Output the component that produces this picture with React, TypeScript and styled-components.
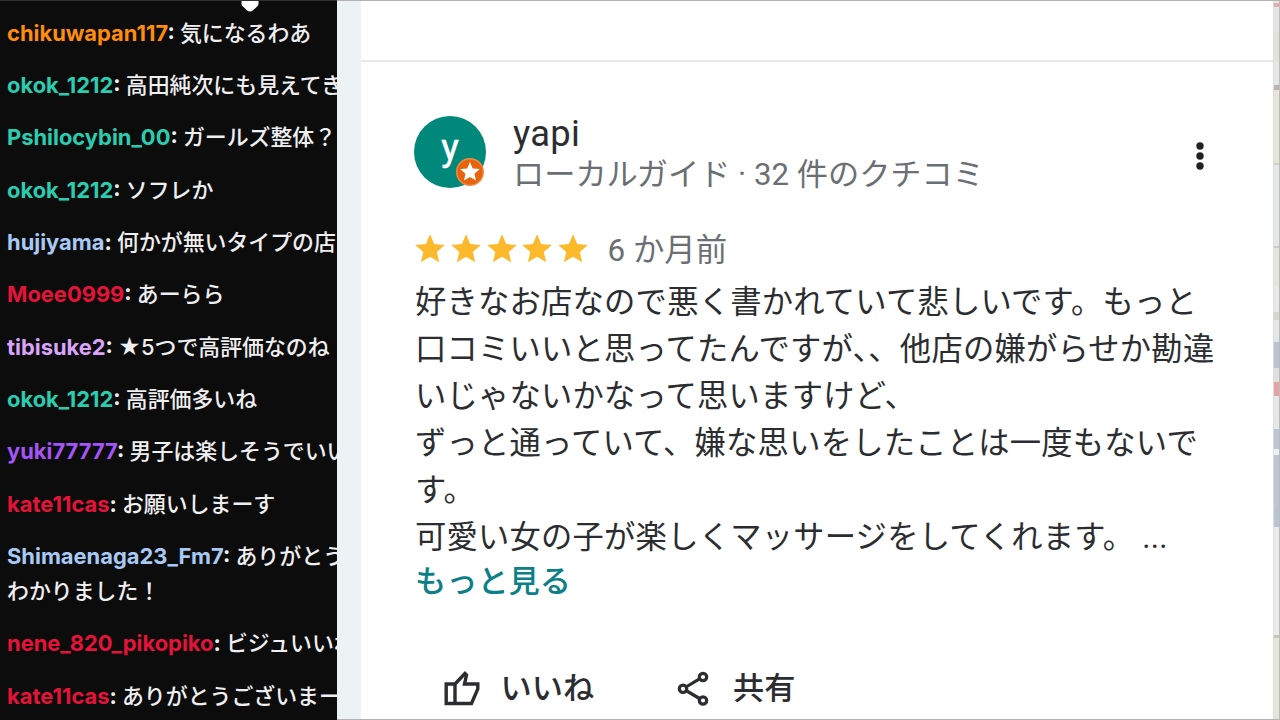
import styled, { createGlobalStyle } from "styled-components";

const colors = {
  chatBg: "#0c0c0c",
  chatText: "#efeff1",
  gutter: "#edf3f4",
  text: "#2c2d30",
  muted: "#6b6f74",
  teal: "#00897b",
  link: "#0b8088",
  star: "#fdb92c",
  badge: "#e8640c",
  line: "#e6e8ea",
};

const GlobalStyle = createGlobalStyle`
  body {
    margin: 0;
    overflow: hidden;
    background: #fff;
  }
`;

const Page = styled.div`
  position: relative;
  display: flex;
  width: 1280px;
  height: 720px;
  overflow: hidden;
`;

const EdgeLine = styled.div<{ $side: "top" | "bottom" }>`
  position: absolute;
  ${(props) => props.$side}: 0;
  left: 337px;
  right: 0;
  height: 1px;
  background: #b2b2b2;
`;

const Chat = styled.aside`
  position: relative;
  flex: none;
  width: 337px;
  height: 720px;
  box-sizing: border-box;
  padding-top: 6px;
  overflow: hidden;
  color: ${colors.chatText};
  background: ${colors.chatBg};
  border-top: 1px solid #303030;
  font-family: Inter, "Noto Sans CJK JP", sans-serif;
`;

const Pointer = styled.svg`
  position: absolute;
  top: -1px;
  left: 222px;
`;

const Message = styled.div`
  padding: 8.77px 0 8.77px 7px;
  font-size: 21.9px;
  font-weight: 500;
  line-height: 34.8px;
  white-space: pre;
`;

const User = styled.span<{ $color: string }>`
  color: ${(props) => props.$color};
  font-weight: 700;
`;

const Colon = styled.span`
  font-weight: 700;
`;

const Gutter = styled.div`
  flex: none;
  width: 24px;
  background: ${colors.gutter};
`;

const Panel = styled.main`
  flex: none;
  width: 912px;
  background: #fff;
  color: ${colors.text};
  font-family: Roboto, "Noto Sans CJK JP", sans-serif;
`;

const PreviousEnd = styled.div`
  height: 60px;
  border-bottom: 2px solid ${colors.line};
`;

const Review = styled.article`
  padding: 54px 50px 0 53px;
`;

const Author = styled.header`
  display: flex;
  height: 72px;
`;

const Avatar = styled.svg`
  flex: none;
  margin-right: 27px;
`;

const AuthorText = styled.div`
  flex: 1;
`;

const Name = styled.div`
  height: 39px;
  font-size: 36.4px;
  letter-spacing: 0.25px;
  line-height: 35px;
`;

const Guide = styled.div`
  color: ${colors.muted};
  font-size: 31.2px;
  line-height: 40px;
  white-space: pre;
`;

const MoreButton = styled.svg`
  margin: 25px 17.5px 0 0;
`;

const Rating = styled.div`
  display: flex;
  align-items: center;
  height: 44px;
  margin-top: 39px;
`;

const Age = styled.span`
  margin: 3px 0 0 14.5px;
  color: ${colors.muted};
  font-size: 31.4px;
  line-height: 44px;
`;

const Body = styled.div`
  margin: 9px 0 0 1px;
  font-size: 31.3px;
  letter-spacing: 0.22px;
  line-height: 46.9px;
  white-space: pre;
`;

const ShowMore = styled.div`
  margin: -1px 0 0 1px;
  color: ${colors.link};
  font-size: 31.2px;
  font-weight: 500;
  line-height: 44px;
`;

const Actions = styled.footer`
  display: flex;
  margin: 63px 0 0 25px;
  gap: 82px;
`;

const Action = styled.div`
  display: flex;
  align-items: center;
  height: 44px;
  font-size: 31.2px;
  font-weight: 500;
  line-height: 44px;
`;

const ActionLabel = styled.span<{ $gap: number }>`
  margin-left: ${(props) => props.$gap}px;
`;

const MapEdge = styled.div`
  display: flex;
  flex: none;
  flex-direction: column;
  width: 7px;
  box-sizing: border-box;
  border-left: 1px solid #dcdedc;
  border-right: 1px solid #bcbcbc;
`;

const MapPiece = styled.div<{ $height: number; $color: string }>`
  flex: none;
  height: ${(props) => props.$height}px;
  background: ${(props) => props.$color};
`;

const messages = [
  { user: "chikuwapan117", color: "#ff8c0a", text: "気になるわあ" },
  { user: "okok_1212", color: "#2bcdb1", text: "高田純次にも見えてき" },
  { user: "Pshilocybin_00", color: "#2bcdb1", text: "ガールズ整体？" },
  { user: "okok_1212", color: "#2bcdb1", text: "ソフレか" },
  { user: "hujiyama", color: "#a9c9f5", text: "何かが無いタイプの店" },
  { user: "Moee0999", color: "#e51339", text: "あーらら" },
  { user: "tibisuke2", color: "#d8a5fb", text: "★5つで高評価なのね" },
  { user: "okok_1212", color: "#2bcdb1", text: "高評価多いね" },
  { user: "yuki77777", color: "#a455f7", text: "男子は楽しそうでいい" },
  { user: "kate11cas", color: "#e51339", text: "お願いしまーす" },
  { user: "Shimaenaga23_Fm7", color: "#a9c9f5", text: "ありがとう\nわかりました！" },
  { user: "nene_820_pikopiko", color: "#e51339", text: "ビジュいいね" },
  { user: "kate11cas", color: "#e51339", text: "ありがとうございまー" },
];

const reviewText = `好きなお店なので悪く書かれていて悲しいです。もっと
口コミいいと思ってたんですが、、他店の嫌がらせか勘違
いじゃないかなって思いますけど、
ずっと通っていて、嫌な思いをしたことは一度もないで
す。
可愛い女の子が楽しくマッサージをしてくれます。 ...`;

const mapPieces: [number, string][] = [
  [3, "#e8e8e6"], [4, "#e5a9b5"], [25, "#e4e6e4"], [29, "#e2e2d8"],
  [24, "#e5e7e7"], [5, "#bdb4ae"], [73, "#e5e5da"], [2, "#cfd1c8"],
  [81, "#e3e7e9"], [2, "#cbccc7"], [38, "#e5e5dc"], [26, "#e8e9e8"],
  [8, "#d6d6cc"], [22, "#e5e7e6"], [26, "#b9c6d1"], [14, "#dfe0e0"],
  [14, "#e5a3a3"], [33, "#e8e8e7"], [20, "#bac6d5"], [6, "#eef0f2"],
  [53, "#bac6d5"], [19, "#b7c4d4"], [108, "#ebebec"], [3, "#c6c6c2"],
  [82, "#e5e5da"],
];

const starPath =
  "M12 17.27 18.18 21l-1.64-7.03L22 9.24l-7.19-.61L12 2 9.19 8.63 2 9.24l5.46 4.73L5.82 21z";

const Star: React.FC = () => (
  <svg width="35.8" height="36" viewBox="1.2 -0.1 24.1 24.2">
    <path d={starPath} fill={colors.star} />
  </svg>
);

const App: React.FC = () => (
  <>
    <GlobalStyle />
    <Page>
      <Chat>
        <Pointer width="56" height="13" viewBox="0 0 56 13">
          <path d="M0 0h56v3H0z" fill={colors.chatBg} />
          <path
            d="M19.5 1h17v3q0 1.2-.9 2.1l-4.6 4.2q-3 2.4-6 0l-4.6-4.2q-.9-.9-.9-2.1z"
            fill="#fff"
          />
        </Pointer>
        {messages.map((message, index) => (
          <Message key={index}>
            <User $color={message.color}>{message.user}</User>
            <Colon>: </Colon>
            {message.text}
          </Message>
        ))}
      </Chat>
      <Gutter />
      <Panel>
        <PreviousEnd />
        <Review>
          <Author>
            <Avatar width="72" height="72" viewBox="0 0 72 72">
              <circle cx="36" cy="36" r="36" fill={colors.teal} />
              <text
                x="36"
                y="43.5"
                fill="#fff"
                stroke="#fff"
                strokeWidth="0.6"
                fontSize="37"
                textAnchor="middle"
              >
                y
              </text>
              <circle cx="56" cy="56" r="14" fill="#ee8b4a" />
              <circle cx="56" cy="56" r="12.6" fill={colors.badge} />
              <path
                d={starPath}
                fill="#fff"
                transform="translate(44.2 44) scale(0.98)"
              />
            </Avatar>
            <AuthorText>
              <Name>yapi</Name>
              <Guide>ローカルガイド · 32 件のクチコミ</Guide>
            </AuthorText>
            <MoreButton width="12" height="30" viewBox="0 0 12 30">
              <circle cx="6" cy="5" r="3.7" fill="#202124" />
              <circle cx="6" cy="15" r="3.7" fill="#202124" />
              <circle cx="6" cy="25" r="3.7" fill="#202124" />
            </MoreButton>
          </Author>
          <Rating>
            <Star />
            <Star />
            <Star />
            <Star />
            <Star />
            <Age>6 か月前</Age>
          </Rating>
          <Body>{reviewText}</Body>
          <ShowMore>もっと見る</ShowMore>
          <Actions>
            <Action>
              <svg
                width="44"
                height="40"
                viewBox="0 0 44 40"
                fill="none"
                stroke={colors.text}
                strokeWidth="3.4"
              >
                <path d="M7.2 15H16L26 4.5 27.5 6l-2 9h13.3v5l-6.3 14.5H7.2zM16 15v19.5" />
              </svg>
              <ActionLabel $gap={17.5}>いいね</ActionLabel>
            </Action>
            <Action>
              <svg
                width="36"
                height="40"
                viewBox="0 0 36 40"
                fill="none"
                stroke={colors.text}
                strokeWidth="3.2"
              >
                <path d="M10 18 23.5 9.8M10 21.5l13.5 8" />
                <circle cx="7" cy="19.8" r="3.7" />
                <circle cx="27" cy="8" r="3.7" />
                <circle cx="27" cy="31.5" r="3.7" />
              </svg>
              <ActionLabel $gap={21}>共有</ActionLabel>
            </Action>
          </Actions>
        </Review>
      </Panel>
      <MapEdge>
        {mapPieces.map(([height, color], index) => (
          <MapPiece key={index} $height={height} $color={color} />
        ))}
      </MapEdge>
      <EdgeLine $side="top" />
      <EdgeLine $side="bottom" />
    </Page>
  </>
);

export default App;
